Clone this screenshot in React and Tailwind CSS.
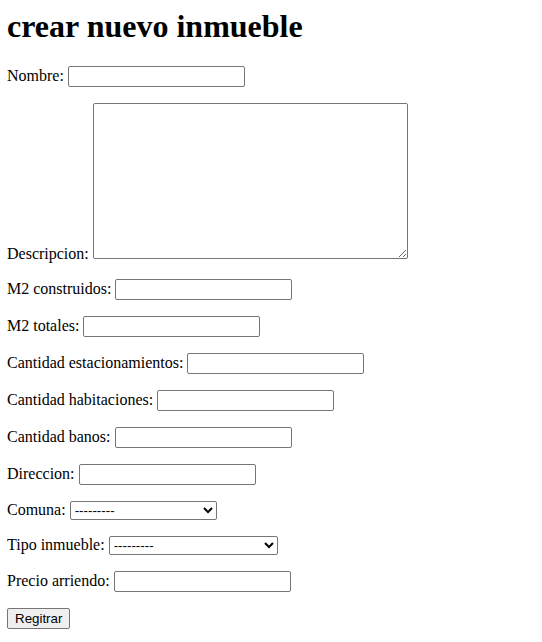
import { useState } from 'react'

const inputCls =
  "inline-block w-[177px] h-[21px] border border-[#767676] rounded-[2px] px-[2px] py-[1px] bg-white text-[13.333px] leading-[normal] font-['Liberation_Sans',Arial,sans-serif] align-baseline"

const selectCls =
  "inline-block h-[19px] border border-[#767676] rounded-[2px] bg-white text-[13.333px] leading-[normal] font-['Liberation_Sans',Arial,sans-serif] text-black"

function Field({ id, label, ...props }) {
  return (
    <p className="my-4">
      <label htmlFor={id}>{label}</label> <input id={id} type="text" className={inputCls} {...props} />
    </p>
  )
}

function SelectField({ id, label, width }) {
  const [value, setValue] = useState('')
  return (
    <p className="my-4">
      <label htmlFor={id}>{label}</label>{' '}
      <select id={id} value={value} onChange={(e) => setValue(e.target.value)} className={`${selectCls} ${width}`}>
        <option value="">---------</option>
      </select>
    </p>
  )
}

export default function App() {
  return (
    <div className="bg-white min-h-screen py-2 pl-[7px] pr-2 text-black text-[16px] leading-[normal] font-['Liberation_Serif','Times_New_Roman',serif]">
      <h1 className="text-[32px] leading-[normal] font-bold mt-0 mb-[21.44px]">crear nuevo inmueble</h1>
      <form onSubmit={(e) => e.preventDefault()}>
        <Field id="id_nombre" label="Nombre:" />
        <p className="my-4">
          <label htmlFor="id_descripcion">Descripcion:</label>{' '}
          <textarea
            id="id_descripcion"
            className="inline-block w-[315px] h-[156px] border border-[#767676] rounded-[2px] px-[2px] py-[1px] bg-white text-[13.333px] leading-[normal] font-['Liberation_Mono',monospace] align-baseline"
          />
        </p>
        <Field id="id_m2_construidos" label="M2 construidos:" />
        <Field id="id_m2_totales" label="M2 totales:" />
        <Field id="id_estacionamientos" label="Cantidad estacionamientos:" />
        <Field id="id_habitaciones" label="Cantidad habitaciones:" />
        <Field id="id_banos" label="Cantidad banos:" />
        <Field id="id_direccion" label="Direccion:" />
        <SelectField id="id_comuna" label="Comuna:" width="w-[147px]" />
        <SelectField id="id_tipo" label="Tipo inmueble:" width="w-[169px]" />
        <Field id="id_precio" label="Precio arriendo:" />
        <p className="my-4">
          <button
            type="submit"
            className="inline-block h-[21px] border border-[#767676] rounded-[2px] bg-[#efefef] px-[7px] py-[1px] text-[13.333px] leading-[normal] font-['Liberation_Sans',Arial,sans-serif]"
          >
            Regitrar
          </button>
        </p>
      </form>
    </div>
  )
}
